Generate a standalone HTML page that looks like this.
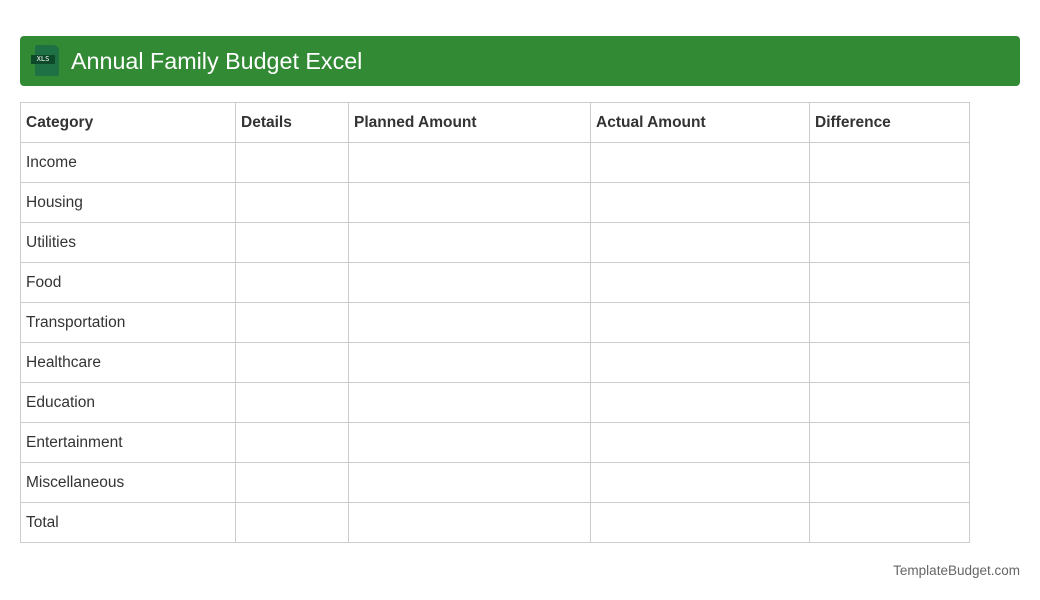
<!DOCTYPE html>
<html><head><style>
body{margin:0;background:#fff;font-family:"Liberation Sans",sans-serif;}
.hdr{position:absolute;left:20px;top:36px;width:1000px;height:50px;background:#328a35;border-radius:4px;}
.hdr .t{position:absolute;left:51px;top:12px;font-size:23.3px;color:#fff;}
.ic{position:absolute;left:15px;top:9px;width:24px;height:31px;background:#1e7145;border-radius:2px 6px 2px 2px;}
.ic span{position:absolute;left:-4px;top:10px;width:24px;height:9px;background:#0d4a2a;color:#fff;font-size:7px;line-height:9px;text-align:center;font-family:"DejaVu Sans Mono",monospace;}
table{position:absolute;left:20px;top:102px;border-collapse:collapse;}
td{border:1px solid #ccc;height:39px;padding:0 0 0 5px;font-size:15.5px;color:#333;}
tr:first-child td{font-weight:bold;}
.f{position:absolute;right:20px;top:563px;font-size:13.5px;color:#666;}
</style></head><body>
<div class="hdr"><div class="ic"><span>XLS</span></div><div class="t">Annual Family Budget Excel</div></div>
<table>
<tr><td style="width:209px">Category</td><td style="width:107px">Details</td><td style="width:236px">Planned Amount</td><td style="width:213px">Actual Amount</td><td style="width:154px">Difference</td></tr>
<tr><td>Income</td><td></td><td></td><td></td><td></td></tr>
<tr><td>Housing</td><td></td><td></td><td></td><td></td></tr>
<tr><td>Utilities</td><td></td><td></td><td></td><td></td></tr>
<tr><td>Food</td><td></td><td></td><td></td><td></td></tr>
<tr><td>Transportation</td><td></td><td></td><td></td><td></td></tr>
<tr><td>Healthcare</td><td></td><td></td><td></td><td></td></tr>
<tr><td>Education</td><td></td><td></td><td></td><td></td></tr>
<tr><td>Entertainment</td><td></td><td></td><td></td><td></td></tr>
<tr><td>Miscellaneous</td><td></td><td></td><td></td><td></td></tr>
<tr><td>Total</td><td></td><td></td><td></td><td></td></tr>
</table>
<div class="f">TemplateBudget.com</div>
</body></html>
